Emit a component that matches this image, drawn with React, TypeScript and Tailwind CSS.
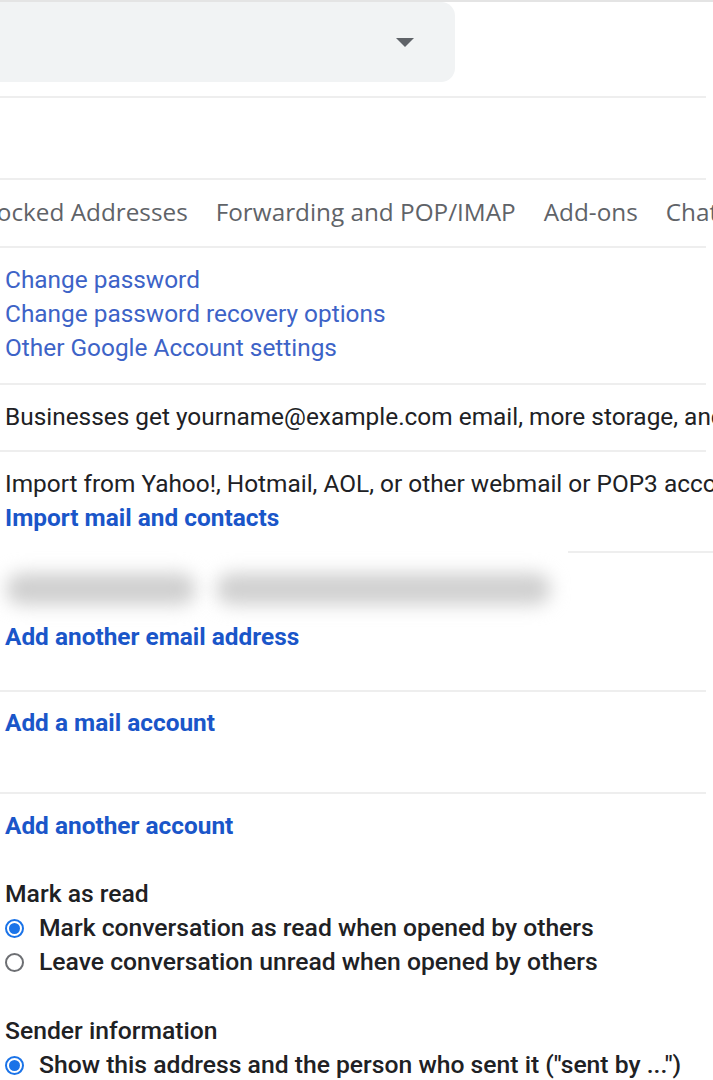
import React from "react";

const Line = ({ className = "" }: { className?: string }) => (
  <div className={"h-[2px] w-[706px] bg-[#eeeeee] " + className} />
);

const Radio = ({ checked }: { checked: boolean }) =>
  checked ? (
    <span className="flex h-[19px] w-[19px] shrink-0 items-center justify-center rounded-full border-[2px] border-[#1a73e8] bg-white">
      <span className="h-[11px] w-[11px] rounded-full bg-[#1a73e8]" />
    </span>
  ) : (
    <span className="h-[19px] w-[19px] shrink-0 rounded-full border-[2px] border-[#6d6f73] bg-white" />
  );

export default function App() {
  return (
    <div
      className="h-[1080px] w-[713px] overflow-hidden bg-white text-[24.4px] leading-[34px] text-[#202124]"
      style={{ fontFamily: "Roboto, 'Liberation Sans', sans-serif" }}
    >
      <div className="h-[2px] w-full bg-[#e4e4e4]" />
      <div className="flex h-[80px] w-[455px] items-center justify-end rounded-r-[14px] bg-[#f1f3f4] pr-[41px]">
        <svg width="18" height="9" viewBox="0 0 18 9">
          <path d="M0 0 L18 0 L9 9 Z" fill="#5f6368" />
        </svg>
      </div>
      <div className="h-[14px]" />
      <Line />
      <div className="h-[80px]" />
      <Line />
      <div
        className="flex h-[66px] items-center gap-[28px] whitespace-nowrap pb-[3px] text-[24.3px] text-[#5f6368]"
        style={{ fontFamily: "'Open Sans', Roboto, sans-serif" }}
      >
        <span className="ml-[-25px]">Blocked Addresses</span>
        <span>Forwarding and POP/IMAP</span>
        <span>Add-ons</span>
        <span>Chat and Meet</span>
      </div>
      <Line />
      <div className="flex flex-col pb-[18px] pl-[5px] pt-[15px] text-[#3d63c7]">
        <span>Change password</span>
        <span>Change password recovery options</span>
        <span>Other Google Account settings</span>
      </div>
      <Line />
      <div className="whitespace-nowrap pb-[16px] pl-[5px] pt-[15px]">
        Businesses get yourname@example.com email, more storage, and admin tools
      </div>
      <Line />
      <div className="flex flex-col whitespace-nowrap pb-[16px] pl-[5px] pt-[15px]">
        <span>Import from Yahoo!, Hotmail, AOL, or other webmail or POP3 accounts.</span>
        <span className="font-bold text-[#1a56c9]">Import mail and contacts</span>
      </div>
      <div className="flex">
        <div className="flex h-[68px] w-[568px] items-center gap-[20px] bg-white pl-[6px] pt-[8px]">
          <div className="h-[32px] w-[190px] rounded-full bg-[#cfcfcf] blur-[9px]" />
          <div className="h-[32px] w-[335px] rounded-full bg-[#d0d0d0] blur-[9px]" />
        </div>
        <div className="h-[2px] flex-1 bg-[#eeeeee]" />
      </div>
      <div className="pb-[36px] pl-[5px] pt-[1px] font-bold text-[#1a56c9]">Add another email address</div>
      <Line />
      <div className="pb-[52px] pl-[5px] pt-[14px] font-bold text-[#1a56c9]">Add a mail account</div>
      <Line />
      <div className="flex flex-col pl-[5px] pt-[15px]">
        <span className="font-bold text-[#1a56c9]">Add another account</span>
        <span className="h-[34px]" />
        <span className="text-[24.7px] font-medium">Mark as read</span>
        <label className="flex items-center gap-[15px] text-[24.7px] font-medium">
          <Radio checked />
          <span>Mark conversation as read when opened by others</span>
        </label>
        <label className="flex items-center gap-[15px] text-[24.7px] font-medium">
          <Radio checked={false} />
          <span>Leave conversation unread when opened by others</span>
        </label>
        <span className="h-[35px]" />
        <span className="text-[24.7px] font-medium">Sender information</span>
        <label className="flex items-center gap-[15px] whitespace-nowrap text-[24.7px] font-medium">
          <Radio checked />
          <span>Show this address and the person who sent it ("sent by ...")</span>
        </label>
      </div>
    </div>
  );
}
